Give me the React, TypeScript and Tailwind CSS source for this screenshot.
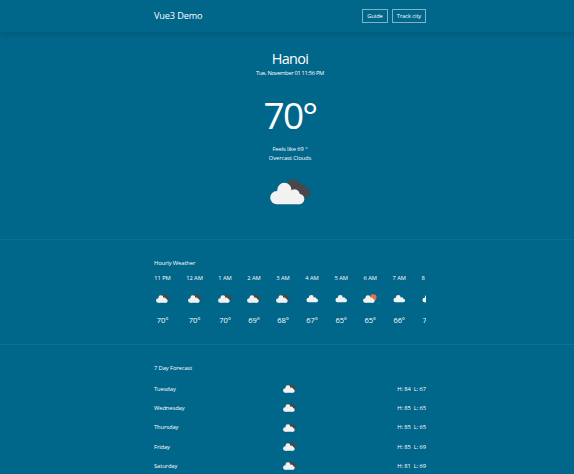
type Kind = "overcast" | "cloud" | "sun";

function Cloud({ kind, className }: { kind: Kind; className: string }) {
  return (
    <svg viewBox={kind === "cloud" ? "-4 1 41 26" : "0 0 41 26"} className={className}>
      {kind === "overcast" && (
        <g fill="#48484a">
          <circle cx="23.5" cy="7" r="6.7" />
          <circle cx="31" cy="9.4" r="4.6" />
          <circle cx="35.8" cy="13.8" r="4.7" />
          <path d="M19 8H31L37 18.5H24Z" />
        </g>
      )}
      {kind === "sun" && <circle cx="30" cy="9.8" r="9.5" fill="#ec6e4c" />}
      <g fill="#f2f2f2">
        <circle cx="6.8" cy="18.7" r="6.6" />
        <circle cx="14.4" cy="11" r="7.2" />
        <circle cx="24.5" cy="15.5" r="5.2" />
        <circle cx="29" cy="20" r="5.3" />
        <path d="M6.8 13H27V17H29V25.3H6.8Z" />
      </g>
    </svg>
  );
}

const hours: { time: string; temp: string; kind: Kind; width: string }[] = [
  { time: "11 PM", temp: "70°", kind: "overcast", width: "w-[17px] mr-[15px]" },
  { time: "12 AM", temp: "70°", kind: "overcast", width: "w-[17px] mr-[15px]" },
  { time: "1 AM", temp: "70°", kind: "overcast", width: "w-[14px] mr-[15px]" },
  { time: "2 AM", temp: "69°", kind: "overcast", width: "w-[14px] mr-[15px]" },
  { time: "3 AM", temp: "68°", kind: "overcast", width: "w-[14px] mr-[15px]" },
  { time: "4 AM", temp: "67°", kind: "cloud", width: "w-[14px] mr-[15.2px]" },
  { time: "5 AM", temp: "65°", kind: "cloud", width: "w-[14px] mr-[15px]" },
  { time: "6 AM", temp: "65°", kind: "sun", width: "w-[14px] mr-[15px]" },
  { time: "7 AM", temp: "66°", kind: "cloud", width: "w-[14px] mr-[15px]" },
  { time: "8 AM", temp: "70°", kind: "cloud", width: "w-[14px]" },
];

const days = [
  { name: "Tuesday", high: 84, low: 67 },
  { name: "Wednesday", high: 85, low: 65 },
  { name: "Thursday", high: 85, low: 65 },
  { name: "Friday", high: 85, low: 69 },
  { name: "Saturday", high: 81, low: 69 },
];

export default function App() {
  return (
    <div className="flex h-[474px] w-full flex-col overflow-hidden bg-[#00668a] font-['Open_Sans','Noto_Sans',sans-serif] text-[5.8px] leading-[8px] tracking-[-0.1px] text-white">
      <header className="h-8 shrink-0 pl-[6px] shadow-[0_3px_5px_-1px_rgba(0,0,0,0.14)]">
        <nav className="mx-auto flex h-8 w-[272px] items-center justify-between">
          <h1 className="text-[9.2px] leading-3 tracking-[-0.15px]">Vue3 Demo</h1>
          <div className="flex gap-1">
            <button className="h-[14px] w-[26px] border border-white/50 text-center leading-3">Guide</button>
            <button className="h-[14px] w-[34px] border border-white/50 text-center leading-3">Track city</button>
          </div>
        </nav>
      </header>

      <section className="flex h-[208px] shrink-0 flex-col items-center border-b border-white/5 pl-[6px]">
        <h2 className="mt-[18px] h-[17px] text-[14.4px] leading-[17px] tracking-[-0.6px]">Hanoi</h2>
        <p className="mt-[2px] tracking-[-0.33px]">Tue, November 01 11:56 PM</p>
        <p className="mt-[16px] h-[44px] text-[37px] leading-[44px] tracking-[-1.8px]">70°</p>
        <p className="mt-[8px]">Feels like 69 °</p>
        <p className="mt-[1px]">Overcast Clouds</p>
        <Cloud kind="overcast" className="mt-[17px] h-[26px] w-[41px]" />
      </section>

      <section className="h-[105px] shrink-0 border-b border-white/[0.07] pl-[6px]">
        <div className="mx-auto w-[272px] overflow-hidden pt-[19px]">
          <h3>Hourly Weather</h3>
          <div className="mt-[7px] flex">
            {hours.map((h) => (
              <div key={h.time} className={`flex shrink-0 flex-col items-center ${h.width}`}>
                <span className="whitespace-nowrap">{h.time}</span>
                <Cloud kind={h.kind} className="mt-[12px] h-[9px] w-[14px]" />
                <span className="mt-[12px] text-[7.5px] leading-[10px]">{h.temp}</span>
              </div>
            ))}
          </div>
        </div>
      </section>

      <section className="shrink-0 pl-[6px] pt-[19px]">
        <div className="mx-auto w-[272px]">
          <h3>7 Day Forecast</h3>
          <div className="mt-[7px]">
            {days.map((d) => (
              <div key={d.name} className="flex h-[19.3px] items-center">
                <span className="w-[129px]">{d.name}</span>
                <Cloud kind="overcast" className="h-[9px] w-[14px]" />
                <div className="flex flex-1 justify-end gap-[3px]">
                  <span>H: {d.high}</span>
                  <span>L: {d.low}</span>
                </div>
              </div>
            ))}
          </div>
        </div>
      </section>
    </div>
  );
}
